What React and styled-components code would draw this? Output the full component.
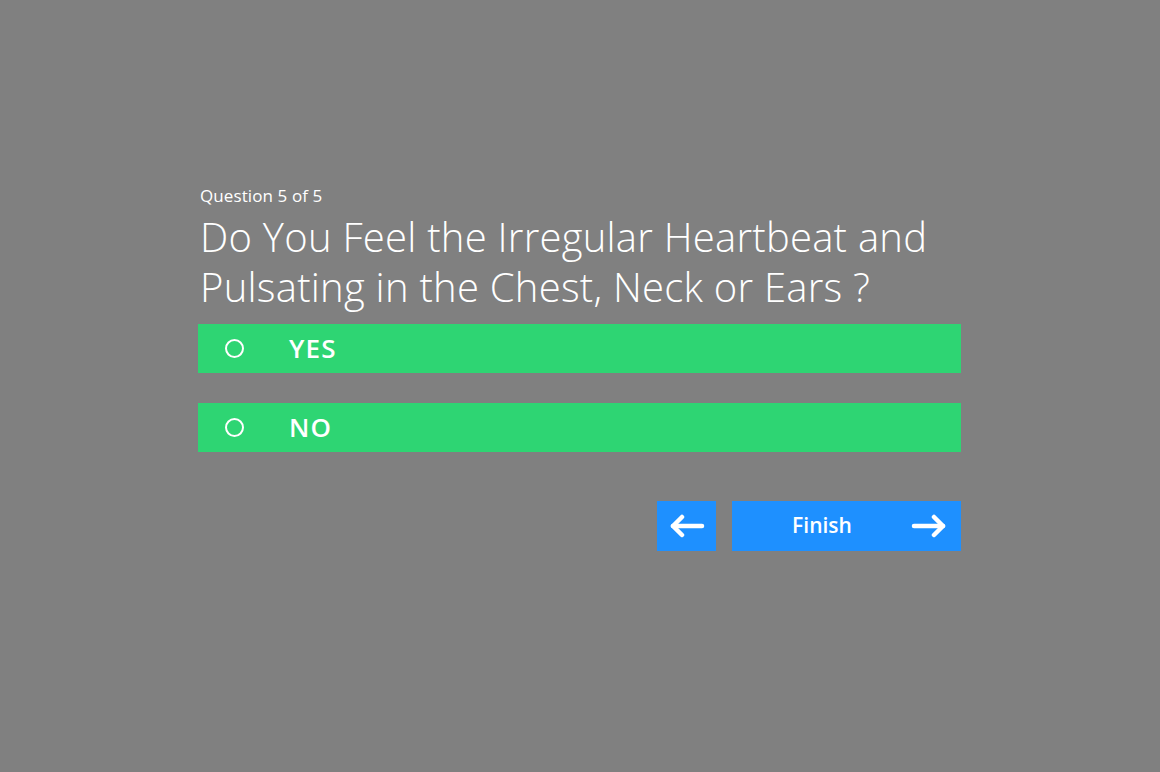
import React from "react";
import styled, { createGlobalStyle } from "styled-components";

const Global = createGlobalStyle`
  html, body { margin: 0; padding: 0; }
  body {
    background: #808080;
    font-family: "Open Sans", "Noto Sans", sans-serif;
    color: #fff;
  }
`;

const Page = styled.div`
  width: 1160px;
  height: 772px;
  background: #808080;
  display: flex;
  justify-content: center;
  padding-top: 184px;
  box-sizing: border-box;
`;

const Quiz = styled.div`
  width: 763px;
  margin-left: -1px;
  display: flex;
  flex-direction: column;
`;

const Counter = styled.div`
  font-size: 17px;
  line-height: 24px;
  padding-left: 2px;
  letter-spacing: 0.1px;
`;

const Title = styled.h1`
  margin: 4px 0 0;
  padding-left: 2px;
  font-weight: 300;
  font-size: 40px;
  line-height: 50px;
  letter-spacing: 0.25px;
`;

const Options = styled.div`
  margin-top: 12px;
  display: flex;
  flex-direction: column;
  gap: 30px;
`;

const Option = styled.label`
  height: 49px;
  background: #2ed573;
  display: flex;
  align-items: center;
  cursor: pointer;
`;

const Radio = styled.span`
  width: 15px;
  height: 15px;
  border: 2px solid #fff;
  border-radius: 50%;
  margin-left: 27px;
  margin-right: 45px;
  flex: none;
`;

const OptionText = styled.span`
  font-size: 26px;
  font-weight: 600;
  letter-spacing: 1.2px;
  margin-top: -2px;
`;

const Nav = styled.div`
  margin-top: 49px;
  display: flex;
  justify-content: flex-end;
  gap: 16px;
`;

const Button = styled.button`
  height: 50px;
  border: 0;
  background: #1e90ff;
  color: #fff;
  font-family: inherit;
  display: flex;
  align-items: center;
  justify-content: center;
  position: relative;
  padding: 0;
  cursor: pointer;
`;

const BackButton = styled(Button)`
  width: 59px;
`;

const FinishButton = styled(Button)`
  width: 229px;
  font-size: 21px;
  font-weight: 600;
`;

const FinishLabel = styled.span`
  margin-left: -49px;
  margin-top: -2px;
`;

const ArrowRight = styled.span`
  position: absolute;
  right: 14px;
  top: 13px;
  display: flex;
`;

const Arrow = ({ dir }) => (
  <svg width="36" height="24" viewBox="0 0 36 24" fill="none" stroke="#fff" strokeWidth="4.5" strokeLinecap="round" strokeLinejoin="round">
    {dir === "left" ? (
      <>
        <path d="M33 12H4" />
        <path d="M13 3L4 12L13 21" />
      </>
    ) : (
      <>
        <path d="M3 12H32" />
        <path d="M23 3L32 12L23 21" />
      </>
    )}
  </svg>
);

export default function App() {
  return (
    <Page>
      <Global />
      <Quiz>
        <Counter>Question 5 of 5</Counter>
        <Title>
          Do You Feel the Irregular Heartbeat and
          <br />
          Pulsating in the Chest, Neck or Ears ?
        </Title>
        <Options>
          <Option>
            <Radio />
            <OptionText>YES</OptionText>
          </Option>
          <Option>
            <Radio />
            <OptionText>NO</OptionText>
          </Option>
        </Options>
        <Nav>
          <BackButton aria-label="Back">
            <Arrow dir="left" />
          </BackButton>
          <FinishButton>
            <FinishLabel>Finish</FinishLabel>
            <ArrowRight>
              <Arrow dir="right" />
            </ArrowRight>
          </FinishButton>
        </Nav>
      </Quiz>
    </Page>
  );
}
